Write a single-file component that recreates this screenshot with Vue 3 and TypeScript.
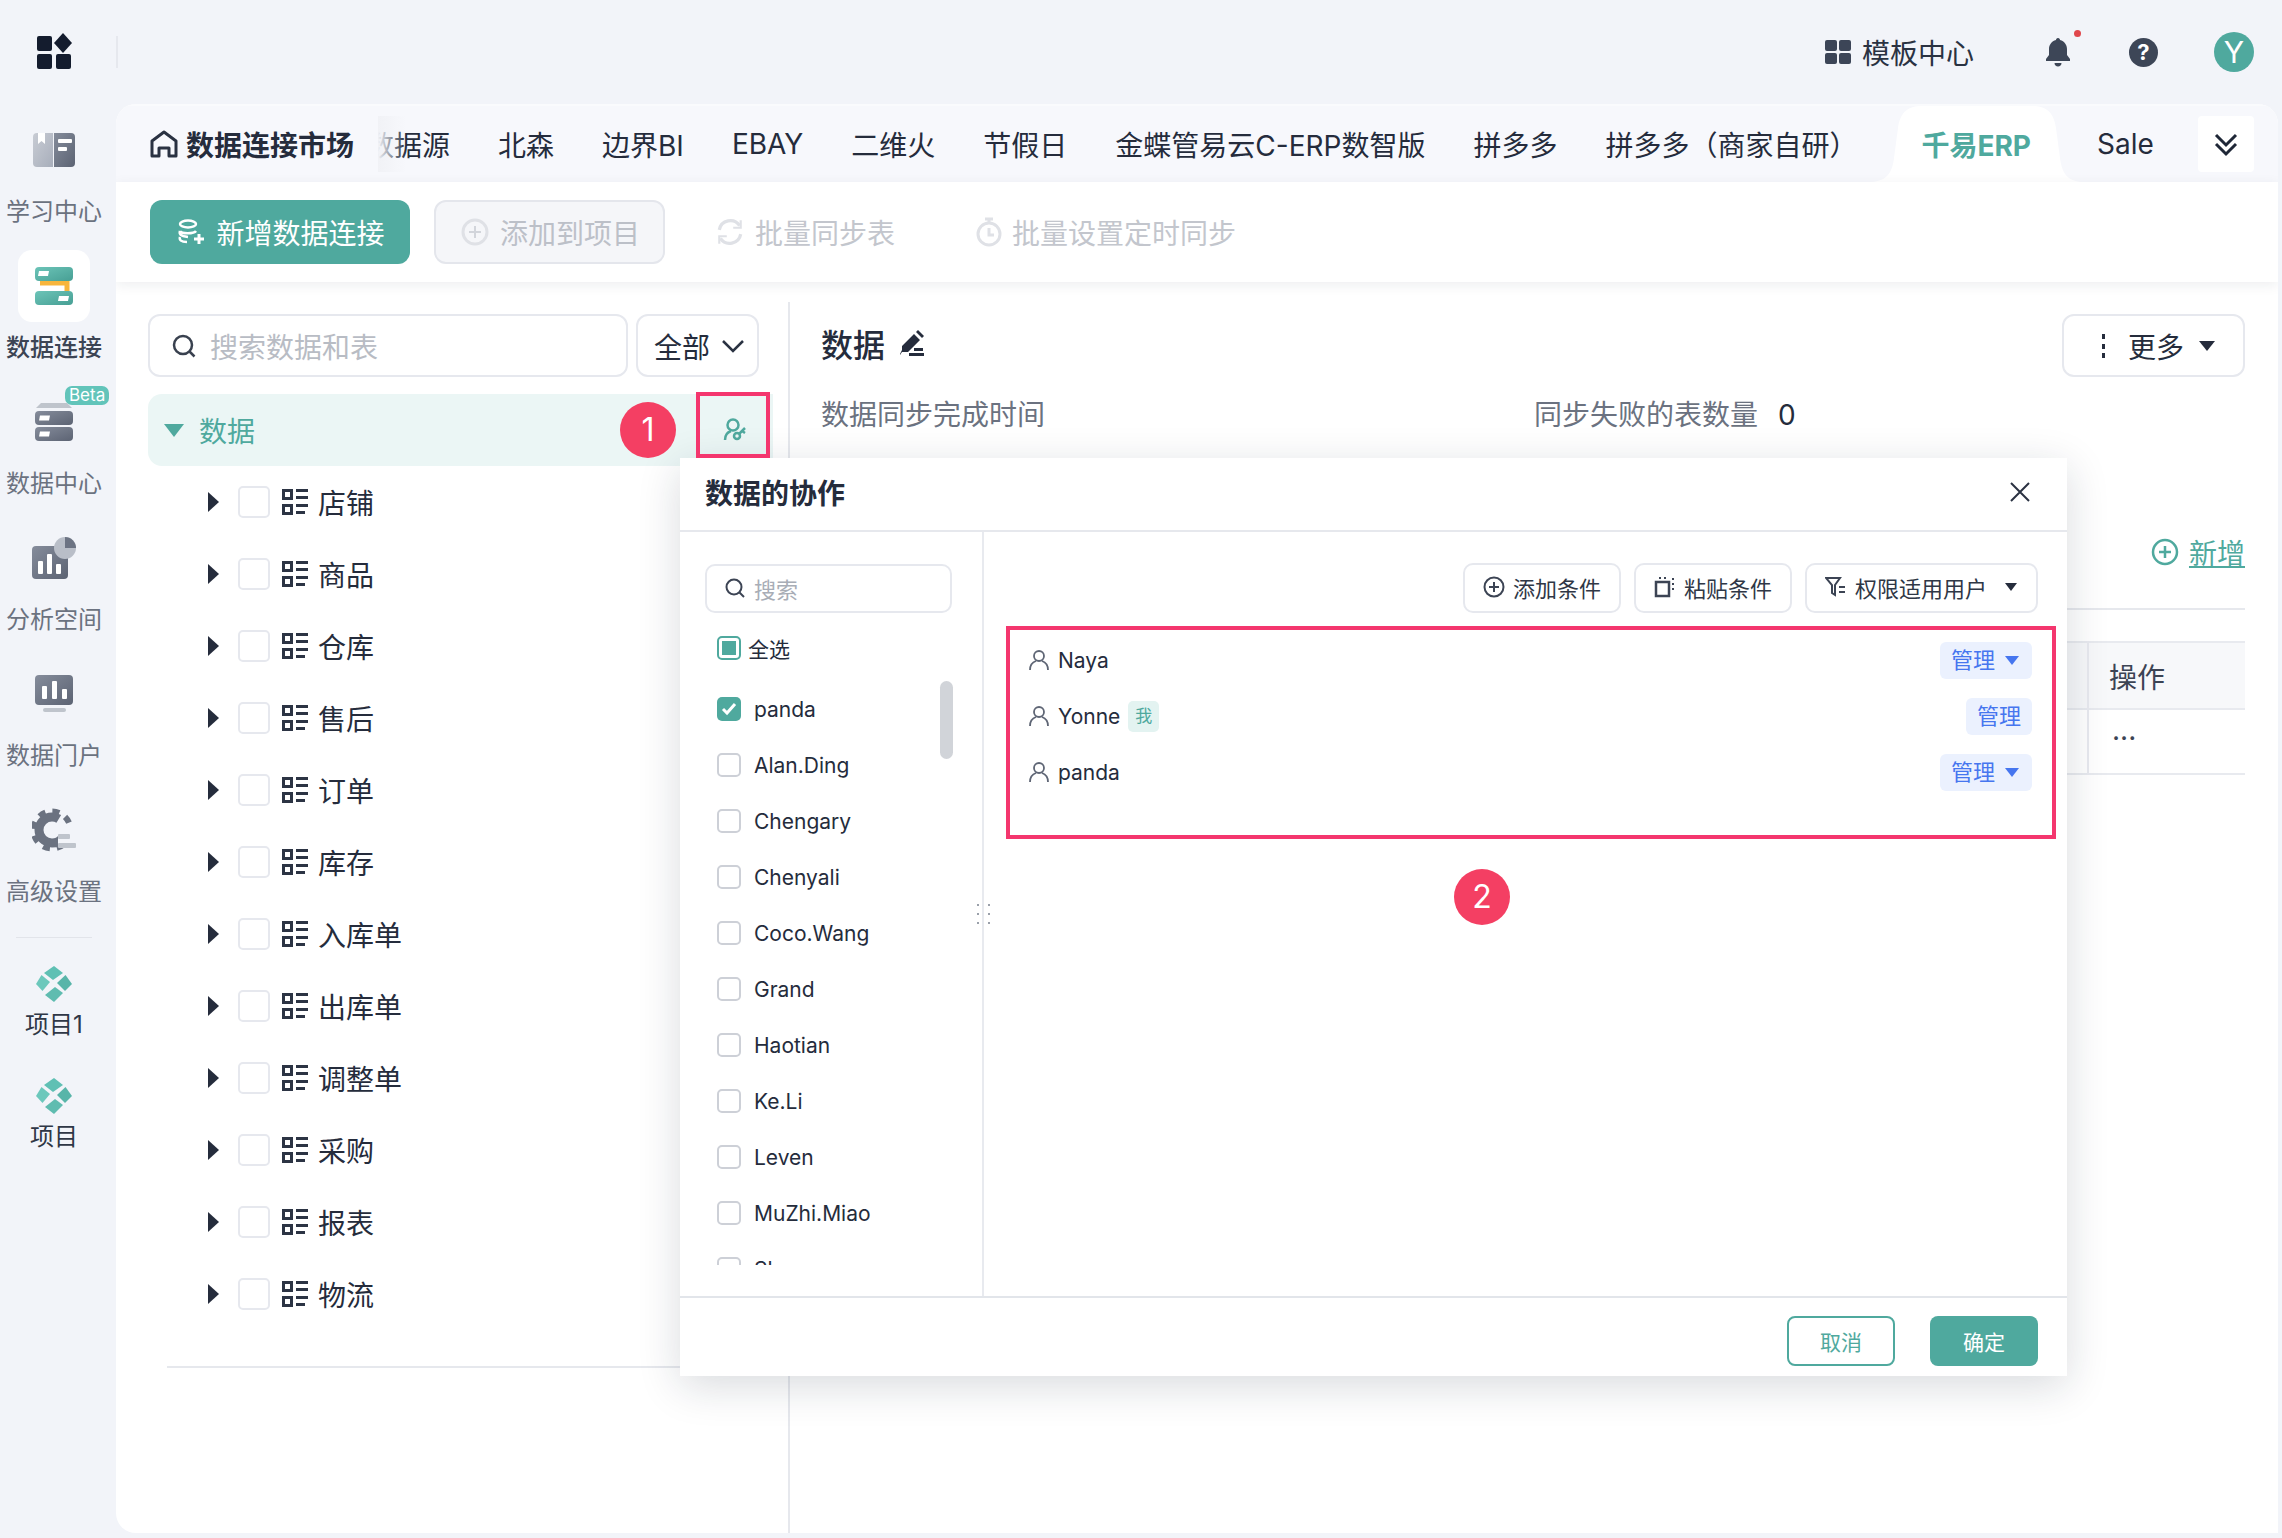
<template>
  <div class="app">
    <header class="topbar">
      <svg class="logo" width="36" height="36" viewBox="0 0 36 36">
        <rect x="0" y="3" width="15" height="15" rx="2" fill="#141c2e" />
        <path d="M26 0l9 10-9 10-9-10z" fill="#141c2e" />
        <rect x="0" y="21" width="15" height="15" rx="2" fill="#141c2e" />
        <rect x="19" y="21" width="15" height="15" rx="2" fill="#141c2e" />
      </svg>
      <i class="topbar__sep"></i>
      <div class="topbar__right">
        <span class="tpl">
          <svg width="26" height="26" viewBox="0 0 26 26" fill="#3c4557">
            <rect x="0" y="1" width="12" height="11" rx="2" /><rect x="14" y="1" width="12" height="11" rx="2" />
            <rect x="0" y="14" width="12" height="11" rx="2" /><rect x="14" y="14" width="12" height="11" rx="2" />
          </svg>
          模板中心
        </span>
        <span class="bell">
          <svg width="28" height="30" viewBox="0 0 28 30" fill="#3d4657">
            <path d="M14 1c1.400 0 2 1 2 2 4.500 1 7 5 7 9v6l3 4v2H2v-2l3-4v-6c0-4 2.500-8 7-9 0-1 .6-2 2-2z" />
            <path d="M10.500 26h7c0 2-1.500 3.500-3.500 3.500s-3.500-1.500-3.500-3.500z" />
          </svg>
          <i class="bell__dot"></i>
        </span>
        <span class="help">?</span>
        <span class="avatar">Y</span>
      </div>
    </header>

    <div class="shell">
      <aside class="side">
        <div class="side__item">
          <span class="side__icon">
            <svg width="42" height="34" viewBox="0 0 42 34">
              <path d="M4 0h16v34H4a4 4 0 0 1-4-4V4a4 4 0 0 1 4-4z" fill="url(#grayLight)" />
              <path d="M21 0h17a4 4 0 0 1 4 4v26a4 4 0 0 1-4 4H21z" fill="url(#grayDark)" />
              <path d="M5 0h7v11l-3.500-3L5 11z" fill="#fff" />
              <rect x="25" y="6" width="14" height="4" rx="1" fill="#fff" />
              <rect x="25" y="14" width="9" height="4" rx="1" fill="#fff" />
              <defs>
                <linearGradient id="grayLight" x1="0" y1="0" x2="1" y2="1"><stop offset="0" stop-color="#c8ccd4" /><stop offset="1" stop-color="#a8aebb" /></linearGradient>
                <linearGradient id="grayDark" x1="0" y1="0" x2="1" y2="1"><stop offset="0" stop-color="#858c9b" /><stop offset="1" stop-color="#5c6373" /></linearGradient>
                <linearGradient id="teal" x1="0" y1="0" x2="1" y2="1"><stop offset="0" stop-color="#6cc4b8" /><stop offset="1" stop-color="#479f94" /></linearGradient>
              </defs>
            </svg>
          </span>
          <span class="side__label">学习中心</span>
        </div>
        <div class="side__item side__item--active">
          <span class="side__card">
            <svg width="38" height="38" viewBox="0 0 38 38">
              <path d="M5 16h27v8" fill="none" stroke="#f7b53c" stroke-width="5" />
              <rect width="38" height="14" rx="4" fill="url(#teal)" />
              <rect y="24" width="38" height="14" rx="4" fill="url(#teal)" />
              <path d="M4 4h10l-1 5H3z" fill="#fff" />
              <path d="M24 29h10l-1 5H23z" fill="#fff" />
            </svg>
          </span>
          <span class="side__label">数据连接</span>
        </div>
        <div class="side__item">
          <span class="side__icon side__icon--beta">
            <svg width="38" height="38" viewBox="0 0 38 38">
              <path d="M6 0h26l5 5H1z" fill="#bfc4cc" />
              <rect y="8" width="38" height="14" rx="4" fill="url(#grayDark)" />
              <rect y="24" width="38" height="14" rx="4" fill="url(#grayDark)" />
              <path d="M5 12.500h10l-1 5H4z" fill="#fff" />
              <path d="M5 28.500h10l-1 5H4z" fill="#fff" />
            </svg>
            <em class="beta">Beta</em>
          </span>
          <span class="side__label">数据中心</span>
        </div>
        <div class="side__item">
          <span class="side__icon">
            <svg width="44" height="42" viewBox="0 0 44 42">
              <rect y="9" width="36" height="33" rx="4" fill="url(#grayDark)" />
              <rect x="6" y="24" width="5" height="13" rx="1" fill="#fff" />
              <rect x="15" y="17" width="5" height="20" rx="1" fill="#fff" />
              <rect x="24" y="27" width="5" height="10" rx="1" fill="#fff" />
              <circle cx="33" cy="11" r="11" fill="#b9bec8" />
              <path d="M33 0a11 11 0 0 1 11 11H33z" fill="#6c7383" />
            </svg>
          </span>
          <span class="side__label">分析空间</span>
        </div>
        <div class="side__item">
          <span class="side__icon">
            <svg width="38" height="38" viewBox="0 0 38 38">
              <rect width="38" height="30" rx="4" fill="url(#grayDark)" />
              <rect x="7" y="11" width="5" height="13" rx="1" fill="#fff" />
              <rect x="17" y="6" width="5" height="18" rx="1" fill="#fff" />
              <rect x="27" y="14" width="5" height="10" rx="1" fill="#fff" />
              <rect x="8" y="33" width="23" height="4" rx="2" fill="#bfc4cc" />
            </svg>
          </span>
          <span class="side__label">数据门户</span>
        </div>
        <div class="side__item">
          <span class="side__icon">
            <svg width="44" height="44" viewBox="0 0 44 44">
              <circle cx="20" cy="22" r="13" fill="none" stroke="#6b7280" stroke-width="9" stroke-dasharray="60 22" stroke-dashoffset="-8" />
              <circle cx="20" cy="22" r="18.500" fill="none" stroke="#6b7280" stroke-width="6" stroke-dasharray="7 7" stroke-dashoffset="-3" />
              <rect x="26" y="16" width="18" height="22" fill="#f2f4f9" />
              <rect x="26" y="26" width="12" height="5" rx="1" fill="#bfc4cc" />
              <rect x="26" y="35" width="18" height="5" rx="1" fill="#bfc4cc" />
            </svg>
          </span>
          <span class="side__label">高级设置</span>
        </div>
        <i class="side__line"></i>
        <div v-for="p in projects" :key="p" class="side__proj">
          <svg width="36" height="36" viewBox="0 0 36 36">
            <path d="M18 0l9 7-10 7-9-7z" fill="#5fc0b4" />
            <path d="M5.500 9l8.500 7-7.500 9L0 18z" fill="#6cc8bc" />
            <path d="M29.500 9l6.500 9-7 7-8-8z" fill="#58b5a9" />
            <path d="M19 21l8 6-9 9-9-7z" fill="#5fbcb0" />
          </svg>
          <span>{{ p }}</span>
        </div>
      </aside>

      <main class="main">
        <nav class="tabs">
          <span class="tabs__home">
            <svg width="28" height="28" viewBox="0 0 28 28" fill="none" stroke="#2a3242" stroke-width="3">
              <path d="M2 26V11L14 2l12 9v15h-7v-8H9v8z" stroke-linejoin="round" />
            </svg>
            数据连接市场
          </span>
          <div class="tabs__scroll">
            <div class="tabs__inner">
              <span v-for="t in tabs" :key="t" class="tab">{{ t }}</span>
              <span class="tab tab--active">
                <svg class="tab__bg" width="217" height="76" viewBox="0 0 217 76">
                  <path d="M0 76C18 76 24 68 26 52L30 22C32 8 38 0 54 0H164C180 0 186 8 188 22L192 52C194 68 200 76 217 76z" fill="#fff" />
                </svg>
                <b>千易ERP</b>
              </span>
              <span class="tab tab--next">Sales</span>
            </div>
            <i class="tabs__fade"></i>
          </div>
          <span class="tabs__more">
            <svg width="28" height="28" viewBox="0 0 28 28" fill="none" stroke="#1f2737" stroke-width="3">
              <path d="M4 5l10 10L24 5M4 14l10 10 10-10" />
            </svg>
          </span>
        </nav>

        <div class="toolbar">
          <button class="btn btn--primary" type="button">
            <svg width="28" height="28" viewBox="0 0 28 28" fill="none" stroke="#fff" stroke-width="2.500">
              <ellipse cx="11" cy="6" rx="8" ry="3.500" />
              <path d="M3 13c1 3 14 3 16 0M3 13c-1 3 0 5 8 6M3 19c-1 3 1 5 7 5" />
              <path d="M22 16v10M17 21h10" stroke-width="3" />
            </svg>
            新增数据连接
          </button>
          <button class="btn btn--disabled" type="button">
            <svg width="28" height="28" viewBox="0 0 28 28" fill="none" stroke="#dfe1e6" stroke-width="3">
              <circle cx="14" cy="14" r="12" /><path d="M14 8v12M8 14h12" stroke="#d2d5db" stroke-width="2" />
            </svg>
            添加到项目
          </button>
          <span class="tool">
            <svg width="30" height="30" viewBox="0 0 28 28" fill="none" stroke="#dfe1e6" stroke-width="3">
              <path d="M4 12a10.500 10.500 0 0 1 19-4M24 16a10.500 10.500 0 0 1-19 4" />
              <path d="M24 3v7h-7M4 25v-7h7" stroke-width="2" />
            </svg>
            批量同步表
          </span>
          <span class="tool tool--timer">
            <svg width="26" height="30" viewBox="0 0 26 30" fill="none" stroke="#dfe1e6" stroke-width="3">
              <circle cx="13" cy="17" r="11" /><path d="M9 2h8M13 2v4M13 11v7h5" />
            </svg>
            批量设置定时同步
          </span>
        </div>

        <div class="body">
          <section class="left">
            <div class="left__search">
              <label class="search">
                <svg width="26" height="26" viewBox="0 0 26 26" fill="none" stroke="#39414f" stroke-width="2.500">
                  <circle cx="12" cy="12" r="9" /><path d="M18.500 18.500l5 5" />
                </svg>
                <span>搜索数据和表</span>
              </label>
              <span class="select">
                全部
                <svg width="24" height="14" viewBox="0 0 24 14" fill="none" stroke="#2a3242" stroke-width="2.500"><path d="M2 2l10 10L22 2" /></svg>
              </span>
            </div>
            <div class="root-row">
              <i class="root-row__arrow"></i>
              <span>数据</span>
              <svg class="root-row__icon" width="24" height="24" viewBox="0 0 24 24" fill="none" stroke="#4fa99e" stroke-width="2.500">
                <circle cx="10" cy="7" r="5.500" />
                <path d="M2 22c0-5 3-8 6-9" />
                <circle cx="14" cy="18" r="3" />
                <path d="M16 16l6-6M19 13l3 2" />
              </svg>
            </div>
            <ul class="tree">
              <li v-for="n in nodes" :key="n" class="tree__row">
                <i class="tree__arrow"></i>
                <i class="tree__check"></i>
                <svg width="26" height="26" viewBox="0 0 26 26" fill="#2c3444">
                  <path d="M0 0h11v11H0zM3 3v5h5V3zM0 15h11v11H0zM3 18v5h5v-5z" fill-rule="evenodd" />
                  <rect x="14" y="0" width="12" height="3" /><rect x="14" y="7" width="12" height="3" />
                  <rect x="14" y="15" width="12" height="3" /><rect x="14" y="22" width="9" height="3" />
                </svg>
                <span>{{ n }}</span>
              </li>
            </ul>
            <i class="left__line"></i>
          </section>

          <section class="right">
            <div class="right__head">
              <h2>数据
                <svg width="26" height="26" viewBox="0 0 26 26" fill="#252c3c">
                  <path d="M15 4l6 6L9 22H3l-2 3v-1l2-4v-4z" />
                  <path d="M17 2l2-2 6 6-2 2z" />
                  <rect x="15" y="18" width="9" height="3" /><rect x="10" y="23" width="15" height="3" />
                </svg>
              </h2>
              <span class="more">
                <svg width="4" height="24" viewBox="0 0 4 24" fill="#252c3c">
                  <rect width="3" height="5" /><rect y="10" width="3" height="5" /><rect y="19" width="3" height="5" />
                </svg>
                更多<i class="caret"></i>
              </span>
            </div>
            <div class="right__info">
              <span>数据同步完成时间</span>
              <span>同步失败的表数量<em>0</em></span>
            </div>
            <div class="right__add">
              <svg width="28" height="28" viewBox="0 0 28 28" fill="none" stroke="#4fa99e" stroke-width="2.500">
                <circle cx="14" cy="14" r="12" /><path d="M14 8v12M8 14h12" />
              </svg>
              <u>新增</u>
            </div>
            <table class="grid">
              <thead><tr><th></th><th class="grid__op">操作</th></tr></thead>
              <tbody><tr><td></td><td class="grid__op">...</td></tr></tbody>
            </table>
          </section>
        </div>
      </main>
    </div>

    <span class="mark mark--1">1</span>
    <i class="frame frame--1"></i>

    <div class="dialog">
      <header class="dialog__head">
        <strong>数据的协作</strong>
        <svg width="22" height="22" viewBox="0 0 22 22" fill="none" stroke="#2a3242" stroke-width="2"><path d="M2 2l18 18M20 2L2 20" /></svg>
      </header>
      <div class="dialog__body">
        <div class="pick">
          <label class="pick__search">
            <svg width="22" height="22" viewBox="0 0 22 22" fill="none" stroke="#3c4454" stroke-width="2">
              <circle cx="10" cy="10" r="7.500" /><path d="M15.500 15.500l4.500 4.500" />
            </svg>
            <span>搜索</span>
          </label>
          <div class="pick__all"><i class="cb cb--half"></i>全选</div>
          <div class="pick__list">
            <div v-for="(u, i) in people" :key="u" class="pick__row">
              <i class="cb" :class="{ 'cb--on': i === 0 }">
                <svg v-if="i === 0" width="18" height="18" viewBox="0 0 18 18" fill="none" stroke="#fff" stroke-width="3"><path d="M3 9l4 4 8-9" /></svg>
              </i>
              {{ u }}
            </div>
            <i class="pick__thumb"></i>
          </div>
        </div>
        <div class="users">
          <div class="users__tools">
            <button class="tbtn" type="button">
              <svg width="22" height="22" viewBox="0 0 22 22" fill="none" stroke="#3c4454" stroke-width="2"><circle cx="11" cy="11" r="9.500" /><path d="M11 6v10M6 11h10" /></svg>
              添加条件
            </button>
            <button class="tbtn" type="button">
              <svg width="22" height="22" viewBox="0 0 22 22" fill="none" stroke="#3c4454" stroke-width="2.500">
                <rect x="2" y="6" width="13" height="14" /><path d="M5 2h2M10 2h2M19 2v2M19 7v2M19 12v2" stroke-width="2" />
              </svg>
              粘贴条件
            </button>
            <button class="tbtn" type="button">
              <svg width="22" height="22" viewBox="0 0 22 22" fill="none" stroke="#3c4454" stroke-width="2">
                <path d="M1 2h14l-5 7v10l-3-2V9z" /><path d="M14 11h6M14 16h6" />
              </svg>
              权限适用用户
              <i class="caret caret--sm"></i>
            </button>
          </div>
          <div class="users__list">
            <div v-for="m in members" :key="m.name" class="member">
              <svg width="20" height="20" viewBox="0 0 20 20" fill="none" stroke="#5f6675" stroke-width="1.800">
                <circle cx="10" cy="6" r="5" /><path d="M1 20c0-5 3-8 6-9M19 20c0-5-3-8-6-9" />
              </svg>
              <span class="member__name">{{ m.name }}</span>
              <em v-if="m.self" class="member__me">我</em>
              <span class="member__role">管理<i v-if="!m.self" class="member__caret"></i></span>
            </div>
          </div>
          <i class="frame frame--2"></i>
          <span class="mark mark--2">2</span>
        </div>
        <span class="handle"><i v-for="d in 6" :key="d"></i></span>
      </div>
      <footer class="dialog__foot">
        <button class="foot foot--ghost" type="button">取消</button>
        <button class="foot foot--solid" type="button">确定</button>
      </footer>
    </div>
  </div>
</template>

<script setup lang="ts">
const projects: string[] = ['项目1', '项目']
const tabs: string[] = ['数据源', '北森', '边界BI', 'EBAY', '二维火', '节假日', '金蝶管易云C-ERP数智版', '拼多多', '拼多多（商家自研）']
const nodes: string[] = ['店铺', '商品', '仓库', '售后', '订单', '库存', '入库单', '出库单', '调整单', '采购', '报表', '物流']
const people: string[] = ['panda', 'Alan.Ding', 'Chengary', 'Chenyali', 'Coco.Wang', 'Grand', 'Haotian', 'Ke.Li', 'Leven', 'MuZhi.Miao', 'Shane']
const members: { name: string; self?: boolean }[] = [{ name: 'Naya' }, { name: 'Yonne', self: true }, { name: 'panda' }]
</script>

<style>
body {
  margin: 0;
  background: #f2f4f9;
}
</style>

<style scoped>
.app {
  position: relative;
  width: 2282px;
  height: 1538px;
  overflow: hidden;
  background: #f2f4f9;
  color: #252c3c;
  font-family: Inter, "Noto Sans CJK SC", sans-serif;
  font-size: 28px;
}
i, em { font-style: normal; }
button { font-family: inherit; cursor: pointer; }

.topbar {
  display: flex;
  align-items: center;
  height: 104px;
  padding-left: 37px;
  box-sizing: border-box;
}
.logo { margin-top: -2px; }
.topbar__sep {
  width: 2px;
  height: 32px;
  margin-left: 43px;
  background: #e6e8ee;
}
.topbar__right {
  display: flex;
  align-items: center;
  margin-left: auto;
  padding-right: 28px;
}
.tpl {
  display: flex;
  align-items: center;
  gap: 11px;
  color: #2a3242;
}
.bell {
  position: relative;
  display: flex;
  margin-left: 70px;
}
.bell__dot {
  position: absolute;
  left: 30px;
  top: -7px;
  width: 7px;
  height: 7px;
  border-radius: 50%;
  background: #e0474c;
}
.help {
  width: 29px;
  height: 29px;
  margin-left: 57px;
  border-radius: 50%;
  background: #3d4657;
  color: #fff;
  font-size: 22px;
  font-weight: 700;
  line-height: 29px;
  text-align: center;
}
.avatar {
  width: 40px;
  height: 40px;
  margin-left: 56px;
  border-radius: 50%;
  background: #4fa99e;
  color: #fff;
  font-size: 30px;
  line-height: 40px;
  text-align: center;
}

.shell {
  display: flex;
  height: 1434px;
}
.side {
  display: flex;
  flex-direction: column;
  flex: none;
  box-sizing: border-box;
  width: 116px;
  padding: 10px 8px 0 0;
}
.side__item {
  display: flex;
  flex-direction: column;
  align-items: center;
  height: 136px;
}
.side__icon {
  position: relative;
  display: flex;
  align-items: center;
  justify-content: center;
  height: 72px;
}
.side__card {
  display: flex;
  align-items: center;
  justify-content: center;
  width: 72px;
  height: 72px;
  border-radius: 14px;
  background: #fff;
}
.side__label {
  margin-top: 9px;
  color: #6b7280;
  font-size: 24px;
  line-height: 34px;
  white-space: nowrap;
}
.side__item--active .side__label {
  color: #3c4454;
  font-weight: 500;
}
.beta {
  position: absolute;
  left: 30px;
  top: 0;
  padding: 0 4px;
  border-radius: 7px;
  background: #62c4ba;
  color: #fff;
  font-size: 17px;
  line-height: 19px;
}
.side__line {
  width: 76px;
  height: 1px;
  margin: 7px 0 28px 16px;
  background: #e2e4ea;
}
.side__proj {
  display: flex;
  flex-direction: column;
  align-items: center;
  height: 112px;
  color: #2f3746;
  font-size: 24px;
  line-height: 34px;
}
.side__proj span { margin-top: 6px; }

.main {
  display: flex;
  flex-direction: column;
  flex: 1;
  margin: 0 4px 5px 0;
  overflow: hidden;
  border-radius: 20px 20px 0 20px;
  background: #fff;
}
.tabs {
  display: flex;
  align-items: center;
  flex: none;
  box-sizing: border-box;
  height: 78px;
  padding-left: 34px;
  background: #f7f8fc;
  border-top: 2px solid #fafbfd;
}
.tabs__home {
  display: flex;
  align-items: center;
  flex: none;
  gap: 8px;
  width: 228px;
  font-weight: 700;
  white-space: nowrap;
}
.tabs__scroll {
  position: relative;
  width: 1776px;
  flex: none;
  height: 76px;
  overflow: hidden;
}
.tabs__inner {
  display: flex;
  align-items: center;
  height: 76px;
  gap: 48px;
  margin-left: -12px;
  white-space: nowrap;
}
.tabs__fade {
  position: absolute;
  left: 0;
  top: 10px;
  width: 28px;
  height: 56px;
  background: linear-gradient(90deg, #f1f2f6, rgba(241, 242, 246, 0));
}
.tab {
  position: relative;
  flex: none;
  color: #252c3c;
}
.tab--active {
  display: flex;
  align-items: center;
  align-self: stretch;
  margin: 0 -30px 0 16px;
  padding-right: 48px;
  color: #4fa99e;
}
.tab--active b { position: relative; font-weight: 700; }
.tab__bg {
  position: absolute;
  left: -53px;
  top: 0;
}
.tabs__more {
  display: flex;
  align-items: center;
  justify-content: center;
  width: 56px;
  height: 56px;
  margin-left: 44px;
  border-radius: 4px;
  background: #fff;
}

.toolbar {
  position: relative;
  display: flex;
  align-items: center;
  flex: none;
  box-sizing: border-box;
  height: 100px;
  padding-left: 34px;
  box-shadow: 0 3px 12px rgba(30, 40, 60, 0.08);
}
.btn {
  display: flex;
  align-items: center;
  justify-content: center;
  gap: 11px;
  box-sizing: border-box;
  height: 64px;
  padding: 0 0 0 2px;
  border-radius: 12px;
  font-size: 28px;
}
.btn--primary {
  width: 260px;
  border: 0;
  background: #4fa99e;
  color: #fff;
}
.btn--disabled {
  width: 231px;
  margin-left: 24px;
  border: 2px solid #e4e6ec;
  background: #f5f6f9;
  color: #bcc0c8;
}
.tool {
  display: flex;
  align-items: center;
  gap: 10px;
  margin-left: 50px;
  color: #c3c6cd;
}
.tool--timer { margin-left: 81px; }

.body {
  display: flex;
  flex: 1;
  min-height: 0;
}
.left {
  display: flex;
  flex-direction: column;
  flex: none;
  box-sizing: border-box;
  width: 674px;
  margin-top: 20px;
  padding: 12px 0 0 32px;
  border-right: 2px solid #e6e8ed;
}
.left__search {
  display: flex;
  gap: 8px;
}
.search, .select, .more {
  display: flex;
  align-items: center;
  box-sizing: border-box;
  height: 63px;
  border: 2px solid #e6e8ee;
  border-radius: 12px;
}
.search {
  gap: 13px;
  width: 480px;
  padding-left: 21px;
  color: #b8bcc4;
}
.select {
  justify-content: space-between;
  width: 123px;
  padding: 0 12px 0 16px;
}
.root-row {
  position: relative;
  display: flex;
  align-items: center;
  gap: 15px;
  height: 72px;
  margin-top: 17px;
  margin-right: 15px;
  padding-left: 16px;
  border-radius: 14px 0 0 14px;
  background: #ebf6f5;
  color: #4fa99e;
}
.root-row__arrow {
  width: 0;
  height: 0;
  border-left: 10px solid transparent;
  border-right: 10px solid transparent;
  border-top: 13px solid #4fa99e;
}
.root-row__icon {
  position: absolute;
  left: 575px;
  top: 24px;
}
.tree {
  margin: 0;
  padding: 0;
  list-style: none;
}
.tree__row {
  display: flex;
  align-items: center;
  height: 72px;
  padding-left: 60px;
}
.tree__arrow {
  width: 0;
  height: 0;
  border-top: 10px solid transparent;
  border-bottom: 10px solid transparent;
  border-left: 11px solid #252c3c;
}
.tree__check {
  box-sizing: border-box;
  width: 32px;
  height: 32px;
  margin: 0 12px 0 19px;
  border: 2px solid #e6e8ee;
  border-radius: 5px;
}
.tree__row span { margin-left: 10px; }
.left__line {
  height: 2px;
  margin: 36px 0 0 19px;
  background: #e6e8ed;
}

.right {
  flex: 1;
  min-width: 0;
  padding: 32px 33px 0 31px;
}
.right__head {
  display: flex;
  align-items: center;
  justify-content: space-between;
}
.right__head h2 {
  display: flex;
  align-items: center;
  gap: 14px;
  margin: -3px 0 3px;
  font-size: 32px;
  font-weight: 500;
}
.more {
  width: 183px;
  gap: 22px;
  padding-left: 38px;
}
.caret {
  width: 0;
  height: 0;
  border-left: 8px solid transparent;
  border-right: 8px solid transparent;
  border-top: 10px solid #252c3c;
}
.more .caret { margin-left: -7px; }
.right__info {
  display: flex;
  margin-top: 18px;
  color: #6b7280;
  line-height: 40px;
}
.right__info span:first-child { width: 713px; }
.right__info em {
  margin-left: 20px;
  color: #252c3c;
}
.right__add {
  display: flex;
  align-items: center;
  justify-content: flex-end;
  gap: 10px;
  height: 58px;
  margin-top: 88px;
  padding-bottom: 27px;
  color: #4fa99e;
  border-bottom: 2px solid #e6e8ed;
}
.grid {
  width: 100%;
  margin-top: 31px;
  border-collapse: collapse;
  font-weight: 400;
}
.grid th {
  height: 65px;
  background: #f7f8fa;
  font-weight: 400;
}
.grid td {
  height: 63px;
  vertical-align: top;
  line-height: 40px;
}
.grid th, .grid td {
  border-top: 2px solid #e8eaef;
  border-bottom: 2px solid #e8eaef;
  padding: 0;
  color: #3c4454;
}
.grid .grid__op {
  width: 133px;
  padding-left: 23px;
  border-left: 2px solid #e8eaef;
  text-align: left;
}
.grid th.grid__op { padding-left: 20px; }

.mark {
  position: absolute;
  z-index: 5;
  width: 56px;
  height: 56px;
  border-radius: 50%;
  background: #f43f63;
  color: #fff;
  font-size: 32px;
  line-height: 56px;
  text-align: center;
}
.mark--1 { left: 620px; top: 402px; }
.mark--2 { left: 470px; top: 337px; }
.frame {
  position: absolute;
  z-index: 5;
  box-sizing: border-box;
  border: 4px solid #f4366e;
}
.frame--1 { left: 696px; top: 392px; width: 74px; height: 66px; }
.frame--2 { left: 22px; top: 94px; width: 1050px; height: 213px; }

.dialog {
  position: absolute;
  z-index: 3;
  left: 680px;
  top: 458px;
  display: flex;
  flex-direction: column;
  width: 1387px;
  height: 918px;
  background: #fff;
  box-shadow: 0 10px 40px rgba(20, 30, 50, 0.16);
}
.dialog__head {
  display: flex;
  align-items: center;
  justify-content: space-between;
  flex: none;
  box-sizing: border-box;
  height: 74px;
  padding: 0 36px 5px 25px;
  border-bottom: 2px solid #e6e8ed;
}
.dialog__head strong { font-weight: 700; }
.dialog__body {
  position: relative;
  display: flex;
  flex: 1;
  min-height: 0;
}
.pick {
  flex: none;
  box-sizing: border-box;
  width: 304px;
  padding: 32px 0 0 25px;
  border-right: 2px solid #e8eaef;
}
.pick__search {
  display: flex;
  align-items: center;
  gap: 8px;
  box-sizing: border-box;
  width: 247px;
  height: 49px;
  padding-left: 17px;
  padding-bottom: 2px;
  border: 2px solid #e6e8ee;
  border-radius: 10px;
  color: #a8adb6;
  font-size: 22px;
}
.pick__all {
  display: flex;
  align-items: center;
  gap: 7px;
  height: 28px;
  margin: 21px 0 0 12px;
  font-size: 21px;
}
.pick__list {
  position: relative;
  height: 584px;
  margin-top: 19px;
  overflow: hidden;
}
.pick__row {
  display: flex;
  align-items: center;
  gap: 13px;
  height: 56px;
  padding-left: 12px;
  font-size: 21px;
}
.cb {
  display: flex;
  align-items: center;
  justify-content: center;
  flex: none;
  box-sizing: border-box;
  width: 24px;
  height: 24px;
  border: 2px solid #cdd0d7;
  border-radius: 5px;
}
.cb--on {
  border: 0;
  background: #4fa99e;
}
.cb--half {
  position: relative;
  border-color: #4fa99e;
}
.cb--half::after {
  content: "";
  width: 14px;
  height: 14px;
  background: #4fa99e;
}
.pick__thumb {
  position: absolute;
  left: 235px;
  top: 0;
  width: 13px;
  height: 78px;
  border-radius: 7px;
  background: #d1d4d9;
}
.users {
  position: relative;
  flex: 1;
  min-width: 0;
}
.users__tools {
  display: flex;
  justify-content: flex-end;
  gap: 13px;
  padding: 31px 29px 0 0;
}
.tbtn {
  display: flex;
  align-items: center;
  justify-content: center;
  gap: 8px;
  box-sizing: border-box;
  height: 50px;
  padding: 0 18px 2px;
  border: 2px solid #e6e8ee;
  border-radius: 10px;
  background: #fff;
  color: #2f3746;
  font-size: 22px;
}
.users__list {
  margin: 19px 0 0 22px;
  width: 1050px;
  box-sizing: border-box;
  padding: 0 24px 0 23px;
}
.member {
  display: flex;
  align-items: center;
  height: 56px;
  font-size: 21px;
}
.member__name { margin-left: 9px; }
.member__me {
  width: 31px;
  margin-left: 8px;
  border-radius: 5px;
  background: #e3f3f1;
  color: #4fa99e;
  font-size: 17px;
  line-height: 31px;
  text-align: center;
}
.member__role {
  display: flex;
  align-items: center;
  gap: 10px;
  margin-left: auto;
  padding: 0 11px;
  border-radius: 6px;
  background: #ebf1fe;
  color: #4676ef;
  font-size: 22px;
  line-height: 37px;
}
.member__caret {
  width: 0;
  height: 0;
  margin-right: 2px;
  border-left: 7px solid transparent;
  border-right: 7px solid transparent;
  border-top: 9px solid #4676ef;
}
.caret--sm {
  margin: 0 1px 0 10px;
  border-left-width: 6px;
  border-right-width: 6px;
  border-top-width: 8px;
}
.handle {
  position: absolute;
  left: 297px;
  top: 372px;
  display: grid;
  grid-template-columns: 2px 2px;
  gap: 7px 9px;
}
.handle i {
  width: 2px;
  height: 2px;
  background: #9aa0aa;
}
.dialog__foot {
  display: flex;
  align-items: center;
  justify-content: flex-end;
  flex: none;
  gap: 35px;
  box-sizing: border-box;
  height: 80px;
  padding: 8px 29px 0 0;
  border-top: 2px solid #e2e5ea;
}
.foot {
  box-sizing: border-box;
  width: 108px;
  height: 50px;
  border-radius: 8px;
  font-size: 21px;
}
.foot--ghost {
  border: 2px solid #4fa99e;
  background: #fff;
  color: #4fa99e;
}
.foot--solid {
  border: 0;
  background: #4fa99e;
  color: #fff;
}
</style>
